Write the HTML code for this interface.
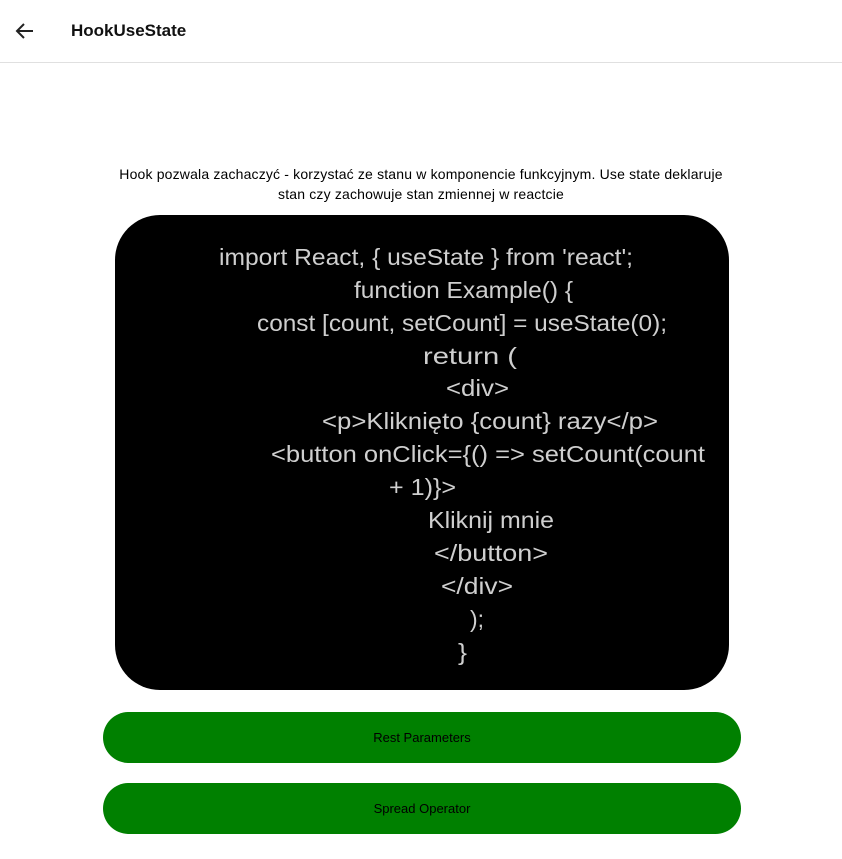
<!DOCTYPE html>
<html><head><meta charset="utf-8"><style>
body{margin:0;width:842px;height:859px;background:#fff;font-family:"Liberation Sans",sans-serif;position:relative;overflow:hidden}
.hdr{position:absolute;top:0;left:0;width:842px;height:62px;border-bottom:1px solid #e0e0e0}
.t{position:absolute;left:71px;top:21px;font-size:17px;font-weight:bold;color:#111}
.desc{position:absolute;left:100px;width:642px;top:164px;text-align:center;font-size:14px;line-height:20px;color:#000;letter-spacing:0.17px}
.box{position:absolute;left:115px;top:215px;width:614px;height:475px;background:#000;border-radius:45px}
.btn{position:absolute;left:103px;width:638px;height:51px;background:#008000;border-radius:26px;text-align:center;line-height:51px;font-size:13px;color:#000}
</style></head><body>
<div class="hdr">
<svg style="position:absolute;left:14px;top:21px" width="22" height="20" viewBox="0 0 22 20"><path d="M19 10H4M10 3L3 10l7 7" stroke="#222" stroke-width="2" fill="none"/></svg>
<div class="t">HookUseState</div>
</div>
<div class="desc">Hook pozwala zachaczyć - korzystać ze stanu w komponencie funkcyjnym. Use state deklaruje<br>stan czy zachowuje stan zmiennej w reactcie</div>
<div class="box"></div>
<svg style="position:absolute;left:0;top:0" width="842" height="859" font-family="Liberation Sans, sans-serif" font-size="23" fill="#cfcfcf">
<text x="219" y="265" textLength="414" lengthAdjust="spacingAndGlyphs">import React, { useState } from 'react';</text>
<text x="354" y="298" textLength="219" lengthAdjust="spacingAndGlyphs">function Example() {</text>
<text x="257" y="331" textLength="410" lengthAdjust="spacingAndGlyphs">const [count, setCount] = useState(0);</text>
<text x="423" y="364" textLength="94" lengthAdjust="spacingAndGlyphs">return (</text>
<text x="446" y="396" textLength="63" lengthAdjust="spacingAndGlyphs">&lt;div&gt;</text>
<text x="322" y="429" textLength="336" lengthAdjust="spacingAndGlyphs">&lt;p&gt;Kliknięto {count} razy&lt;/p&gt;</text>
<text x="271" y="462" textLength="434" lengthAdjust="spacingAndGlyphs">&lt;button onClick={() =&gt; setCount(count</text>
<text x="389" y="495" textLength="67" lengthAdjust="spacingAndGlyphs">+ 1)}&gt;</text>
<text x="428" y="528" textLength="126" lengthAdjust="spacingAndGlyphs">Kliknij mnie</text>
<text x="434" y="561" textLength="114" lengthAdjust="spacingAndGlyphs">&lt;/button&gt;</text>
<text x="441" y="594" textLength="72" lengthAdjust="spacingAndGlyphs">&lt;/div&gt;</text>
<text x="470" y="627" textLength="14" lengthAdjust="spacingAndGlyphs">);</text>
<text x="458" y="660" textLength="9" lengthAdjust="spacingAndGlyphs">}</text>
</svg>
<div class="btn" style="top:712px">Rest Parameters</div>
<div class="btn" style="top:783px">Spread Operator</div>
</body></html>
